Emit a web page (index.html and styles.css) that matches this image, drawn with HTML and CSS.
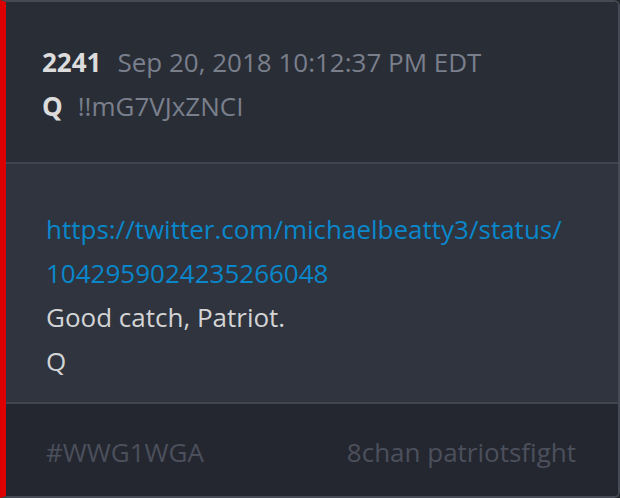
FILE: index.html
```html
<!DOCTYPE html>
<html>
<head>
<meta charset="utf-8">
<link rel="stylesheet" href="styles.css">
</head>
<body>
<div class="card">
  <div class="head">
    <div class="row"><span class="num">2241</span><span class="date">Sep 20, 2018 10:12:37 PM EDT</span></div>
    <div class="row"><span class="name">Q</span><span class="trip">!!mG7VJxZNCI</span></div>
  </div>
  <div class="body">
    <a class="link" href="#">https://twitter.com/michaelbeatty3/status/<br>1042959024235266048</a>
    <div class="text">Good catch, Patriot.</div>
    <div class="text">Q</div>
  </div>
  <div class="foot">
    <span class="tag">#WWG1WGA</span>
    <span class="src">8chan patriotsfight</span>
  </div>
</div>
</body>
</html>
```
FILE: styles.css
```css
html, body {
  margin: 0;
  padding: 0;
  background: #22252c;
}
body {
  font-family: "Open Sans", "DejaVu Sans", sans-serif;
  font-size: 26px;
  line-height: 44px;
}
.card {
  width: 612px;
  height: 494px;
  border: 2px solid #454a55;
  border-left: 6px solid #dc0000;
  border-radius: 0 6px 6px 0;
  overflow: hidden;
  display: flex;
  flex-direction: column;
}
.head {
  background: #292d36;
  padding: 38px 0 34px 36px;
  border-bottom: 2px solid #3f444f;
}
.row { display: flex; align-items: baseline; }
.num { color: #dcdcdc; font-weight: 700; margin-right: 16px; }
.date { color: #7a7f8c; }
.name { color: #dcdcdc; font-weight: 700; margin-right: 15px; }
.trip { color: #7a7f8c; }
.body {
  background: #2f343e;
  padding: 43px 0 0 40px;
  flex: 1;
  border-bottom: 2px solid #40454f;
}
.link {
  color: #0a87cb;
  text-decoration: none;
  display: block;
}
.text { color: #d4d4d6; }
.foot {
  background: #242730;
  padding: 26px 42px 22px 40px;
  display: flex;
  justify-content: space-between;
  color: #4b505c;
}
```
